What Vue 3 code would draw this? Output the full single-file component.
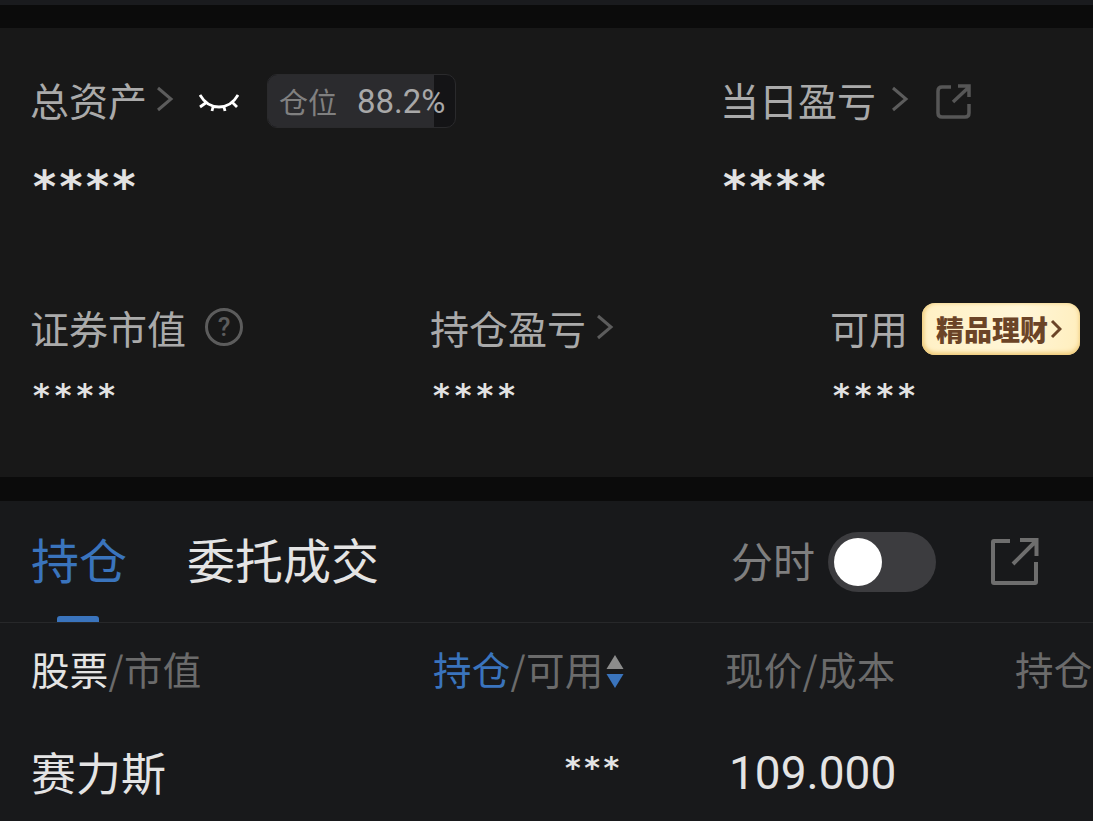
<script setup>
const stats = [
  { label: '证券市值', help: true },
  { label: '持仓盈亏', arrow: true },
  { label: '可用', promo: true },
]
</script>

<template>
  <div class="page">
    <div class="strip"></div>
    <section class="summary">
      <div class="top-row">
        <div class="top-left">
          <div class="line">
            <span class="label">总资产</span>
            <svg class="chev" viewBox="0 0 18 26"><path d="M2 2 L15 13 L2 24" /></svg>
            <svg class="eye" viewBox="0 0 40 20"><path d="M1 2 C10 18 30 18 39 2 M1 14 L8 9 M13 18 L14 14 M26 18 L25 14 M38 14 L33 9" /></svg>
            <div class="pos">
              <div class="pos-fill"></div>
              <span class="pos-name">仓位</span>
              <span class="pos-val">88.2%</span>
            </div>
          </div>
          <div class="stars big">****</div>
        </div>
        <div class="top-right">
          <div class="line">
            <span class="label">当日盈亏</span>
            <svg class="chev chev-b" viewBox="0 0 18 26"><path d="M2 2 L15 13 L2 24" /></svg>
            <svg class="share-s" viewBox="0 0 36 36"><path d="M15 3 H6 Q2 3 2 7 V29 Q2 33 6 33 H29 Q33 33 33 29 V20 M17 18 L33 3 M22 2 H33 V13" /></svg>
          </div>
          <div class="stars big">****</div>
        </div>
      </div>
      <div class="stat-row">
        <div v-for="s in stats" :key="s.label" class="stat">
          <div class="line">
            <span class="label">{{ s.label }}</span>
            <span v-if="s.help" class="help">?</span>
            <svg v-if="s.arrow" class="chev chev-c" viewBox="0 0 18 26"><path d="M2 2 L15 13 L2 24" /></svg>
            <span v-if="s.promo" class="promo">精品理财<svg viewBox="0 0 12 20"><path d="M2 2 L10 10 L2 18" /></svg></span>
          </div>
          <div class="stars small">****</div>
        </div>
      </div>
    </section>
    <section class="holdings">
      <div class="tabs">
        <div class="tab active">持仓<i></i></div>
        <div class="tab">委托成交</div>
        <div class="tools">
          <span class="fs">分时</span>
          <span class="toggle"><b></b></span>
          <svg class="share" viewBox="0 0 48 48"><path d="M19 3 H3 Q2 3 2 4 V44 Q2 45 3 45 H44 Q45 45 45 44 V24 M22 26 L45 3 M29 2 H45.500 V18" /></svg>
        </div>
      </div>
      <div class="heads">
        <div class="h h1"><em>股票</em>/市值</div>
        <div class="h h2"><em class="blue">持仓</em>/可用<svg viewBox="0 0 18 34"><path class="up" d="M9 0 L17.500 14 H0.500 Z" /><path class="down" d="M0.500 19 H17.500 L9 33 Z" /></svg></div>
        <div class="h h3">现价/成本</div>
        <div class="h h4">持仓</div>
      </div>
      <div class="row">
        <div class="name">赛力斯</div>
        <div class="qty">***</div>
        <div class="price">109.000</div>
      </div>
    </section>
  </div>
</template>

<style scoped>
.page {
  width: 1093px;
  height: 821px;
  overflow: hidden;
  background: #0b0b0b;
  font-family: "Noto Sans CJK SC", Roboto, sans-serif;
}
.strip { height: 5px; background: #1a1b1e; }
.summary {
  margin-top: 23px;
  height: 449px;
  background: #181818;
  padding: 46px 0 0 31px;
  box-sizing: border-box;
}
.top-row { display: flex; height: 228px; }
.top-left { width: 690px; }
.line { display: flex; align-items: center; height: 54px; }
.label { font-size: 39px; line-height: 54px; padding-bottom: 4px; margin: 0 1px 0 -1px; color: #aaaaaa; white-space: nowrap; }
.chev { width: 18px; height: 26px; margin: 0 0 4px 8px; flex: none; }
.chev path { fill: none; stroke: #5c5c5c; stroke-width: 3; }
.chev-b { margin-left: 14px; }
.chev-c { margin-left: 9px; }
.eye { width: 40px; height: 20px; margin: 4px 0 0 25px; flex: none; }
.eye path { fill: none; stroke: #fff; stroke-width: 2.800; }
.pos {
  position: relative;
  display: flex;
  align-items: center;
  margin-left: 28px;
  width: 189px;
  height: 54px;
  box-sizing: border-box;
  border: 1px solid #2a2a2c;
  border-radius: 10px;
  padding-left: 11px;
  overflow: hidden;
  background: #141416;
}
.pos-fill { position: absolute; inset: 0 21px 0 0; background: #2b2b2e; }
.pos-name, .pos-val { position: relative; white-space: nowrap; }
.pos-name { font-size: 29px; color: #808080; }
.pos-val { font-size: 33px; color: #a8a8a8; margin-left: 20px; font-family: Roboto, sans-serif; }
.share-s { width: 36px; height: 36px; margin: 2px 0 0 27px; flex: none; }
.share-s path { fill: none; stroke: #565656; stroke-width: 3.500; }
.stars { font-family: "DejaVu Sans", sans-serif; font-weight: 700; color: #e2e2e2; white-space: nowrap; }
.stars.big { font-size: 44px; letter-spacing: 3.500px; line-height: 54px; margin: 32px 0 0 2px; }
.stars.small { font-size: 32px; letter-spacing: 5px; line-height: 44px; margin: 17px 0 0 2px; }
.stat-row { display: flex; }
.stat { width: 400px; flex: none; }
.help {
  width: 38px; height: 38px; margin: 0 0 4px 18px; box-sizing: border-box;
  border: 3px solid #5c5c5c; border-radius: 50%;
  display: flex; align-items: center; justify-content: center;
  font: 500 26px Roboto, sans-serif; color: #5c5c5c;
}
.promo {
  position: relative;
  display: flex; align-items: center; justify-content: center;
  width: 158px; height: 52px; margin-left: 13px;
  padding-right: 4px;
  box-sizing: border-box;
  border-radius: 13px;
  background: linear-gradient(100deg, #fff0c4, #fff6d8 60%, #ffeebd);
  box-shadow: inset 0 -2px 5px #eec874, inset 2px 0 4px #f3d68f;
  color: #6b4427;
  font-size: 28px; font-weight: 900;
  white-space: nowrap;
}
.promo svg { width: 12px; height: 20px; margin-left: 2px; }
.promo path { fill: none; stroke: #6b4427; stroke-width: 3; }
.holdings {
  margin-top: 24px;
  height: 320px;
  background: #18191b;
}
.tabs {
  display: flex; align-items: center;
  height: 121px;
  padding: 0 54px 0 31px;
  border-bottom: 1px solid #27282a;
}
.tab { position: relative; height: 121px; font-size: 48px; line-height: 115px; color: #e4e4e4; white-space: nowrap; }
.tab.active { color: #3a74bd; margin-right: 60px; }
.tab i { position: absolute; left: 26px; bottom: 0; width: 42px; height: 6px; border-radius: 3px 3px 0 0; background: #3a74bd; }
.tools { margin-left: auto; display: flex; align-items: center; height: 62px; margin-top: 1px; }
.fs { font-size: 42px; padding-bottom: 6px; color: #7f7f7f; white-space: nowrap; }
.toggle { display: flex; align-items: center; width: 108px; height: 60px; margin-left: 13px; padding-left: 6px; box-sizing: border-box; border-radius: 30px; background: #3c3c3f; }
.toggle b { width: 48px; height: 48px; border-radius: 50%; background: #fff; }
.share { width: 48px; height: 48px; margin-left: 55px; }
.share path { fill: none; stroke: #6e6e6e; stroke-width: 4; }
.heads { display: flex; height: 92px; align-items: center; font-size: 38.500px; letter-spacing: .3px; color: #6b6b6b; white-space: nowrap; }
.heads em { font-style: normal; color: #e4e4e4; }
.heads em.blue { color: #3a74bd; }
.h { padding-bottom: 2px; }
.h1 { width: 401px; padding-left: 31px; box-sizing: border-box; flex: none; }
.h2 { width: 292px; flex: none; display: flex; align-items: center; box-sizing: border-box; padding-left: 32px; }
.h2 svg { width: 18px; height: 34px; margin: 7px 0 0 2px; }
.up { fill: #8c8c8c; }
.down { fill: #3a74bd; }
.h3 { width: 322px; padding-left: 32px; box-sizing: border-box; flex: none; }
.row { display: flex; align-items: center; height: 116px; }
.name { width: 520px; padding: 0 0 4px 31px; box-sizing: border-box; flex: none; font-size: 45px; color: #e4e4e4; }
.qty { width: 164px; flex: none; font: 700 30px "DejaVu Sans", sans-serif; letter-spacing: 3.500px; color: #e4e4e4; margin: 0 0 12px 45px; }
.price { font: 46px Roboto, sans-serif; color: #e4e4e4; }
</style>
